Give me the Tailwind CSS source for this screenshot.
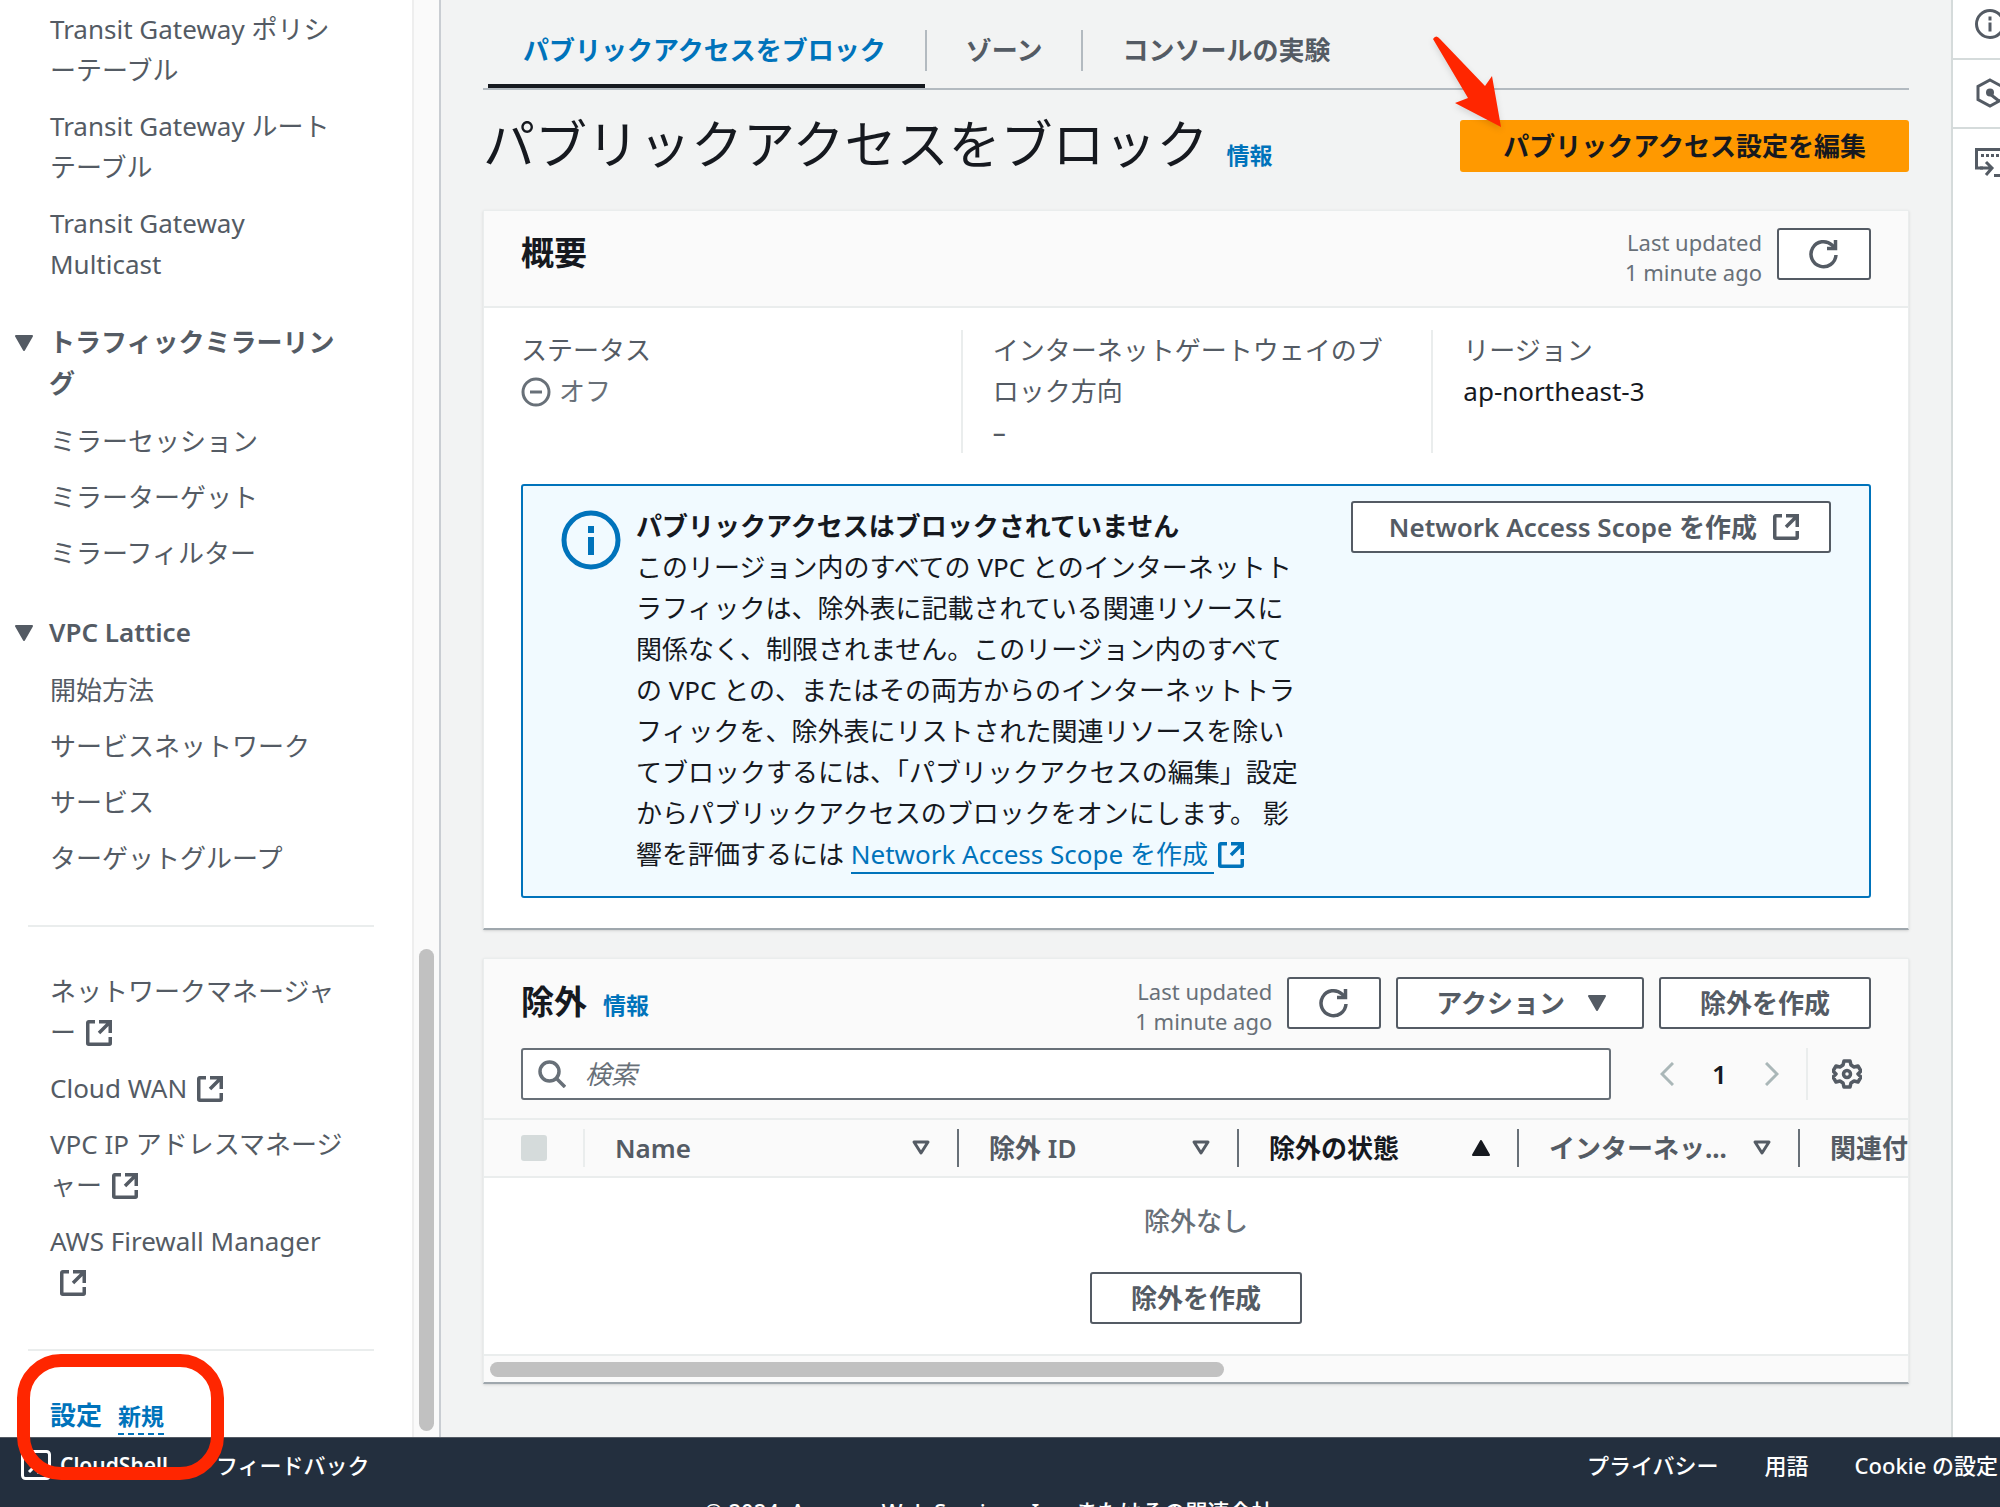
<!DOCTYPE html>
<html lang="ja">
<head>
<meta charset="utf-8">
<title>VPC 設定</title>
<script src="https://cdn.jsdelivr.net/npm/@tailwindcss/browser@4"></script>
</head>
<body class="relative flex h-screen flex-col overflow-hidden bg-[#f2f3f3] font-['Noto_Sans','Noto_Sans_CJK_JP',sans-serif] text-[26px] leading-[41px] text-[#16191f]">
<svg class="hidden">
  <defs>
    <symbol id="external" viewBox="0 0 26 26"><g fill="none" stroke="currentColor" stroke-width="3.500"><path d="M9 1.750H2.750a1 1 0 0 0-1 1v20.500a1 1 0 0 0 1 1h20.500a1 1 0 0 0 1-1V17"/><path d="M13 1.750h11.250V13M24 2 13 13"/></g></symbol>
    <symbol id="refresh" viewBox="0 0 32 32"><g fill="none" stroke="currentColor" stroke-width="3.500"><path d="M28 17a12.500 12.500 0 1 1-4-10l3 3"/><path d="M27.500 2v8.500H19"/></g></symbol>
    <symbol id="sort" viewBox="0 0 20 16"><path d="M3 2h14l-7 11z" fill="none" stroke="currentColor" stroke-width="3" stroke-linejoin="round"/></symbol>
    <symbol id="down" viewBox="0 0 20 16"><path d="M2 1h16l-8 14z" fill="currentColor" stroke="currentColor" stroke-width="2" stroke-linejoin="round"/></symbol>
  </defs>
</svg>

<div class="flex min-h-0 flex-1">
  <nav aria-label="VPC" class="flex w-[441px] shrink-0 overflow-hidden border-r-2 border-[#c9cdd2] bg-white text-[#545b64]">
    <div class="flex-1 pt-[9px]">
      <ul class="flex flex-col gap-[15px] pl-[50px]">
        <li><a href="#">Transit Gateway ポリシ<br>ーテーブル</a></li>
        <li><a href="#">Transit Gateway ルート<br>テーブル</a></li>
        <li><a href="#">Transit Gateway<br>Multicast</a></li>
      </ul>
      <button class="mt-[37px] flex w-full pl-[14px] text-left font-bold"><svg class="mr-[15px] mt-[13px] h-4 w-5"><use href="#down"/></svg><span>トラフィックミラーリン<br>グ</span></button>
      <ul class="mt-[17px] flex flex-col gap-[15px] pl-[50px]">
        <li><a href="#">ミラーセッション</a></li>
        <li><a href="#">ミラーターゲット</a></li>
        <li><a href="#">ミラーフィルター</a></li>
      </ul>
      <button class="mt-[38px] flex w-full pl-[14px] text-left font-semibold"><svg class="mr-[15px] mt-[13px] h-4 w-5"><use href="#down"/></svg><span>VPC Lattice</span></button>
      <ul class="mt-[17px] flex flex-col gap-[15px] pl-[50px]">
        <li><a href="#">開始方法</a></li>
        <li><a href="#">サービスネットワーク</a></li>
        <li><a href="#">サービス</a></li>
        <li><a href="#">ターゲットグループ</a></li>
      </ul>
      <hr class="mb-11 ml-7 mr-[38px] mt-[46px] border-t-2 border-[#eaeded]">
      <ul class="flex flex-col gap-[15px] pl-[50px]">
        <li><a href="#">ネットワークマネージャ<br>ー <svg class="ml-[3px] inline h-[26px] w-[26px] align-[-4px]"><use href="#external"/></svg></a></li>
        <li><a href="#">Cloud WAN <svg class="ml-[3px] inline h-[26px] w-[26px] align-[-4px]"><use href="#external"/></svg></a></li>
        <li><a href="#">VPC IP アドレスマネージ<br>ャー <svg class="ml-[3px] inline h-[26px] w-[26px] align-[-4px]"><use href="#external"/></svg></a></li>
        <li><a href="#">AWS Firewall Manager<br>&nbsp;<svg class="ml-[3px] inline h-[26px] w-[26px] align-[-4px]"><use href="#external"/></svg></a></li>
      </ul>
      <hr class="mb-11 ml-7 mr-[38px] mt-[46px] border-t-2 border-[#eaeded]">
      <p class="flex items-center gap-4 pl-[50px] font-bold text-[#0073bb]"><a href="#">設定</a><a href="#" class="mt-[2px] border-b-2 border-dashed border-[#0073bb] text-[23px] leading-[34px]">新規</a></p>
    </div>
    <div class="flex w-[27px] flex-col justify-end border-l-2 border-[#eeeeee] bg-[#fafafa] pb-[6px] pl-[5px]">
      <div class="h-[482px] w-[15px] rounded-full bg-[#c1c1c1]"></div>
    </div>
  </nav>

  <main class="min-w-0 flex-1 overflow-hidden px-[42px]">
    <div role="tablist" class="flex h-[90px] border-b-2 border-[#b3bac0] pl-[5px] pt-[30px] font-bold text-[#545b64]">
      <button role="tab" class="flex border-b-4 border-[#16191f] pl-[35px] text-[#0073bb]"><span class="pr-[39px]">パブリックアクセスをブロック</span></button>
      <button role="tab" class="flex items-start"><span class="border-l-2 border-[#b3bac0] px-[39px]">ゾーン</span></button>
      <button role="tab" class="flex items-start"><span class="border-l-2 border-[#b3bac0] px-[39px]">コンソールの実験</span></button>
    </div>
    <div class="flex h-[120px] items-start justify-between pt-[30px]">
      <div class="flex items-baseline gap-[18px]">
        <h1 class="text-[52px] leading-[48px]">パブリックアクセスをブロック</h1>
        <a href="#" class="text-[23px] leading-[30px] font-bold text-[#0073bb]">情報</a>
      </div>
      <button class="h-[52px] rounded-[3px] bg-[#ff9900] px-[43px] font-bold">パブリックアクセス設定を編集</button>
    </div>

    <section class="border border-b-2 border-[#eaeded] border-b-[#9fa7ad] bg-white shadow-sm">
      <header class="flex h-[97px] items-start justify-between border-b-2 border-[#eaeded] bg-[#fafafa] px-[37px] pt-[17px]">
        <h2 class="pt-1 text-[33px] font-bold">概要</h2>
        <div class="flex gap-[15px]">
          <p class="-mt-px text-right text-[22px] leading-[30px] text-[#687078]">Last updated<br>1 minute ago</p>
          <button aria-label="更新" class="flex h-[52px] w-[94px] items-center justify-center rounded-[3px] border-2 border-[#545b64] bg-white text-[#545b64]"><svg class="h-8 w-8"><use href="#refresh"/></svg></button>
        </div>
      </header>
      <dl class="grid grid-cols-3 px-[6px] pb-[31px] pt-[22px] text-[#545b64]">
        <div class="px-[31px]"><dt>ステータス</dt><dd class="flex items-center gap-2 text-[#687078]"><svg class="h-[30px] w-[30px]" viewBox="0 0 30 30" fill="none" stroke="currentColor" stroke-width="3"><circle cx="15" cy="15" r="13"/><path d="M9 15h12"/></svg>オフ</dd></div>
        <div class="border-l-2 border-[#eaeded] px-[30px]"><dt>インターネットゲートウェイのブロック方向</dt><dd class="font-medium">–</dd></div>
        <div class="border-l-2 border-[#eaeded] px-[30px]"><dt>リージョン</dt><dd class="text-[#16191f]">ap-northeast-3</dd></div>
      </dl>
      <div class="mx-[37px] mb-[30px] flex items-start rounded-[3px] border-2 border-[#0073bb] bg-[#f1faff] px-[38px] pb-[21px] pt-5">
        <svg class="mt-1 h-[60px] w-[60px] shrink-0 text-[#0073bb]" viewBox="0 0 60 60"><circle cx="30" cy="30" r="27" fill="none" stroke="currentColor" stroke-width="5"/><path d="M27 16h6v7h-6zM27 27h6v18h-6z" fill="currentColor"/></svg>
        <div class="ml-[15px] flex-1 whitespace-nowrap">
          <h3 class="font-bold">パブリックアクセスはブロックされていません</h3>
          <p>このリージョン内のすべての VPC とのインターネットト<br>ラフィックは、除外表に記載されている関連リソースに<br>関係なく、制限されません。このリージョン内のすべて<br>の VPC との、またはその両方からのインターネットトラ<br>フィックを、除外表にリストされた関連リソースを除い<br>てブロックするには、「パブリックアクセスの編集」設定<br>からパブリックアクセスのブロックをオンにします。 影<br>響を評価するには <a href="#" class="text-[#0073bb]"><span class="border-b-2 border-[#0073bb] pr-[6px]">Network Access Scope を作成</span><svg class="ml-1 inline h-[26px] w-[26px] align-[-4px]"><use href="#external"/></svg></a></p>
        </div>
        <button class="-mt-[5px] flex h-[52px] items-center gap-4 rounded-[3px] border-2 border-[#545b64] bg-white pl-9 pr-[30px] font-semibold text-[#545b64]">Network Access Scope を作成<svg class="h-[26px] w-[26px]"><use href="#external"/></svg></button>
      </div>
    </section>

    <section class="mt-[28px] border border-b-2 border-[#eaeded] border-b-[#9fa7ad] bg-white shadow-sm">
      <header class="bg-[#fafafa] px-[37px] pb-[18px] pt-[18px]">
        <div class="flex h-[52px] items-start justify-between">
          <div class="flex items-baseline gap-4 pt-1">
            <h2 class="text-[33px] font-bold">除外</h2>
            <a href="#" class="text-[23px] font-bold text-[#0073bb]">情報</a>
          </div>
          <div class="flex gap-[15px] font-semibold text-[#545b64]">
            <p class="-mt-px text-right text-[22px] leading-[30px] font-normal text-[#687078]">Last updated<br>1 minute ago</p>
            <button aria-label="更新" class="flex h-[52px] w-[94px] items-center justify-center rounded-[3px] border-2 border-[#545b64] bg-white"><svg class="h-8 w-8"><use href="#refresh"/></svg></button>
            <button class="flex h-[52px] items-center gap-[22px] rounded-[3px] border-2 border-[#545b64] bg-white pl-[38px] pr-[35px]">アクション<svg class="h-4 w-5"><use href="#down"/></svg></button>
            <button class="h-[52px] rounded-[3px] border-2 border-[#545b64] bg-white px-[39px]">除外を作成</button>
          </div>
        </div>
        <div class="mt-[19px] flex h-[52px] items-center text-[#545b64]">
          <label class="mr-[49px] flex h-[52px] flex-1 items-center gap-[19px] rounded-[3px] border-2 border-[#687078] bg-white pl-[15px]">
            <svg class="h-7 w-7 text-[#687078]" viewBox="0 0 28 28" fill="none" stroke="currentColor" stroke-width="3.500"><circle cx="11.500" cy="11.500" r="9.500"/><path d="m18 18 9 9"/></svg>
            <input type="search" aria-label="検索" placeholder="検索" class="min-w-0 flex-1 italic outline-none placeholder:text-[#687078]">
          </label>
          <button aria-label="前へ" class="text-[#aab7b8]"><svg class="h-6 w-[14px]" viewBox="0 0 14 24" fill="none" stroke="currentColor" stroke-width="3"><path d="M13 1 2 12l11 11"/></svg></button>
          <button class="w-[91px] font-semibold text-[#16191f]">1</button>
          <button aria-label="次へ" class="text-[#aab7b8]"><svg class="h-6 w-[14px]" viewBox="0 0 14 24" fill="none" stroke="currentColor" stroke-width="3"><path d="m1 1 11 11L1 23"/></svg></button>
          <button aria-label="設定" class="ml-[27px] flex h-[52px] items-center border-l-2 border-[#eaeded] pl-6 pr-[9px]"><svg class="h-[30px] w-[30px]" viewBox="0 0 30 30" fill="none" stroke="currentColor" stroke-width="3.500" stroke-linejoin="round"><path d="M12 2h6l1 4 3 2 4-1 3 5-3 3 3 3-3 5-4-1-3 2-1 4h-6l-1-4-3-2-4 1-3-5 3-3-3-3 3-5 4 1 3-2z"/><circle cx="15" cy="15" r="3.500"/></svg></button>
        </div>
      </header>
      <div class="overflow-hidden">
        <table class="w-[1650px] table-fixed border-collapse text-left">
          <colgroup><col class="w-[101px]"><col class="w-[374px]"><col class="w-[280px]"><col class="w-[280px]"><col class="w-[281px]"><col></colgroup>
          <thead class="h-[58px] border-y-2 border-[#eaeded] bg-[#fafafa] text-[#545b64]">
            <tr>
              <th class="p-0 pl-[37px]"><span class="flex h-[38px] items-center border-r-2 border-[#eaeded]"><input type="checkbox" disabled aria-label="すべて選択" class="h-[26px] w-[26px] appearance-none rounded-[3px] bg-[#d5dbdb]"></span></th>
              <th class="p-0 font-semibold"><button class="flex h-[38px] w-full items-center justify-between border-r-2 border-[#687078] pl-[30px] pr-[26px]">Name<svg class="h-4 w-5"><use href="#sort"/></svg></button></th>
              <th class="p-0 font-semibold"><button class="flex h-[38px] w-full items-center justify-between border-r-2 border-[#687078] pl-[30px] pr-[26px]">除外 ID<svg class="h-4 w-5"><use href="#sort"/></svg></button></th>
              <th class="p-0 text-[#16191f]"><button class="flex h-[38px] w-full items-center justify-between border-r-2 border-[#687078] pl-[30px] pr-[26px]">除外の状態<svg class="h-4 w-5 rotate-180"><use href="#down"/></svg></button></th>
              <th class="p-0"><button class="flex h-[38px] w-full items-center justify-between border-r-2 border-[#687078] pl-[30px] pr-[26px]">インターネッ...<svg class="h-4 w-5"><use href="#sort"/></svg></button></th>
              <th class="p-0 pl-[30px] whitespace-nowrap">関連付け</th>
            </tr>
          </thead>
        </table>
        <div class="flex flex-col items-center pb-[30px] pt-[23px] font-bold text-[#545b64]">
          <p class="font-medium text-[#687078]">除外なし</p>
          <button class="mt-[30px] h-[52px] rounded-[3px] border-2 border-[#545b64] bg-white px-[39px]">除外を作成</button>
        </div>
      </div>
      <div class="flex h-7 items-center border-t-2 border-[#eaeded] bg-[#fafafa] pl-[6px]"><div class="h-[15px] w-[734px] rounded-full bg-[#c1c1c1]"></div></div>
    </section>
  </main>

  <aside class="w-[49px] shrink-0 overflow-hidden border-l-2 border-[#d5dbdb] bg-white text-[#545b64]">
    <button aria-label="情報" class="flex h-[60px] w-full border-b-2 border-[#d5dbdb] pl-[22px] pt-[9px]"><svg class="h-[30px] w-[30px] shrink-0" viewBox="0 0 30 30"><circle cx="15" cy="15" r="13.500" fill="none" stroke="currentColor" stroke-width="3"/><path d="M13.500 7.500h3v4h-3zM13.500 13.500h3v9h-3z" fill="currentColor"/></svg></button>
    <button aria-label="最近" class="flex h-[69px] w-full border-b-2 border-[#d5dbdb] pl-[22px] pt-[18px]"><svg class="h-[30px] w-[30px] shrink-0" viewBox="0 0 30 30"><path d="M15 2 27 8.500v13L15 28 3 21.500v-13z" fill="none" stroke="currentColor" stroke-width="3"/><circle cx="15" cy="14.500" r="4" fill="currentColor"/><path d="m15 16 9 7" stroke="currentColor" stroke-width="3"/></svg></button>
    <button aria-label="ターミナル" class="flex w-full pl-[22px] pt-[19px]"><svg class="h-[30px] w-[30px] shrink-0" viewBox="0 0 30 30" fill="none" stroke="currentColor" stroke-width="3"><path d="M8 20H1.500V1.500h27V18"/><path d="M6 7.500h3m2 0h3m2 0h3m2 0h3"/><path d="M5 20h12m-6-6 6 6-6 7M19 27.500h11"/></svg></button>
  </aside>
</div>

<footer class="h-[70px] shrink-0 overflow-hidden border-t border-[#545b64] bg-[#232f3e] text-[22px] leading-[30px] font-medium text-white">
  <div class="flex items-center pr-[2px] pt-3">
    <a href="#" class="flex items-center gap-[9px] pl-[21px] text-[21px] font-semibold"><svg class="h-[30px] w-[30px]" viewBox="0 0 30 30" fill="none" stroke="currentColor" stroke-width="3"><rect x="1.500" y="1.500" width="27" height="27" rx="3"/><path d="m8 7 8 7-8 8M16 22h7"/></svg>CloudShell</a>
    <a href="#" class="ml-[48px]">フィードバック</a>
    <span class="flex-1"></span>
    <a href="#" class="mr-[46px]">プライバシー</a>
    <a href="#" class="mr-[46px]">用語</a>
    <a href="#">Cookie の設定</a>
  </div>
  <p class="mt-4 text-center">© 2024, Amazon Web Services, Inc. またはその関連会社。</p>
</footer>

<div class="absolute bottom-[27px] left-[17px] h-[126px] w-[207px] rounded-[44px] border-[13px] border-[#ff2600]"></div>
<svg class="absolute right-[490px] top-[30px] h-[110px] w-[90px] drop-shadow-md" viewBox="0 0 90 110"><path d="M13 9q3-5 7 0l45 47 7-10 9 51-46-24 13-5z" fill="#ff2600"/></svg>
</body>
</html>
